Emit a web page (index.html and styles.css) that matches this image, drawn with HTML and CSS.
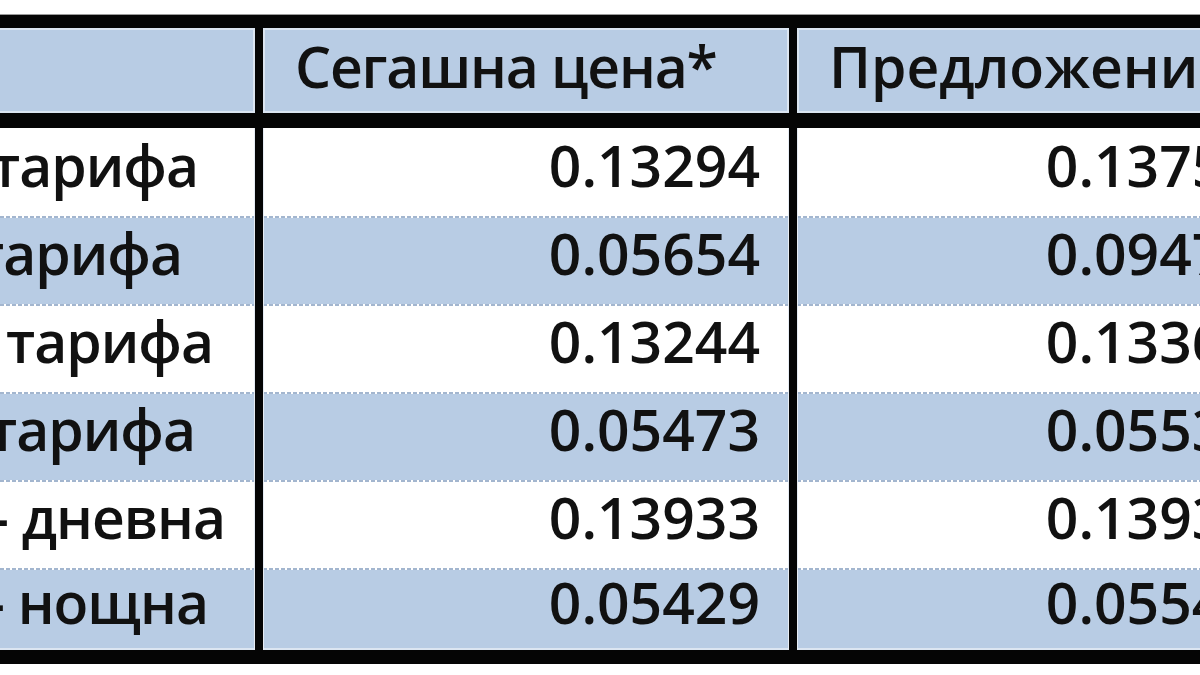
FILE: index.html
```html
<!DOCTYPE html>
<html lang="bg">
<head>
<meta charset="utf-8">
<title>Цени на електроенергия</title>
<link rel="stylesheet" href="styles.css">
</head>
<body>
<div class="sheet">
  <div class="head">
    <div class="cell hcell"></div>
    <div class="cell hcell tight">Сегашна цена*</div>
    <div class="cell hcell">Предложение</div>
  </div>
  <div class="body">
    <div class="cell lbl r1 white first">ЧЕЗ дневна тарифа</div>
    <div class="cell num r1 white first">0.13294</div>
    <div class="cell num r1 white first">0.13752</div>

    <div class="cell lbl r2 blue">ЧЕЗ нощна тарифа</div>
    <div class="cell num r2 blue">0.05654</div>
    <div class="cell num r2 blue">0.09471</div>

    <div class="cell lbl r3 white">ЕВН дневна тарифа</div>
    <div class="cell num r3 white">0.13244</div>
    <div class="cell num r3 white">0.13364</div>

    <div class="cell lbl r4 blue">ЕВН нощна тарифа</div>
    <div class="cell num r4 blue">0.05473</div>
    <div class="cell num r4 blue">0.05531</div>

    <div class="cell lbl r5 white">Енерго-Про - дневна</div>
    <div class="cell num r5 white">0.13933</div>
    <div class="cell num r5 white">0.13931</div>

    <div class="cell lbl r6 blue last">Енерго-Про - нощна</div>
    <div class="cell num r6 blue last">0.05429</div>
    <div class="cell num r6 blue last">0.05544</div>
  </div>
</div>
</body>
</html>
```
FILE: styles.css
```css
html, body {
  margin: 0;
  padding: 0;
  background: #ffffff;
  overflow: hidden;
}
body {
  width: 1200px;
  height: 675px;
  font-family: "Open Sans", "Noto Sans", sans-serif;
  font-size: 57px;
  font-weight: 600;
  color: #111111;
}
.sheet {
  margin-top: 14px;
  margin-left: -420px;
  width: 1706px;
  background: #050505;
  border-top: 1px solid #9a9a9a;
  padding: 13px 0 14px 0;
  display: flex;
  flex-direction: column;
  gap: 15px;
}
.head, .body {
  display: grid;
  grid-template-columns: 675px 526px 489px;
  column-gap: 8px;
}
.head {
  grid-template-rows: 85px;
}
.body {
  grid-template-rows: 88px 88px 88px 88px 88px 82px;
}
.cell {
  display: flex;
  align-items: center;
  white-space: nowrap;
  overflow: hidden;
  min-width: 0;
  box-shadow: inset 1px 0 #e6ecf4, inset -1px 0 #e6ecf4;
}
.hcell {
  background: #b8cce4;
  padding: 0 0 10px 32px;
  box-shadow: inset 0 0 0 2px #dbe5f1;
}
.hcell.tight {
  letter-spacing: -1.2px;
}
.white { background-color: #ffffff; }
.blue { background-color: #b8cce4; }
.body .cell {
  padding-bottom: 14px;
  background-image: repeating-linear-gradient(90deg, #a3b6cf 0 4px, #ffffff 4px 6px);
  background-size: 100% 2px;
  background-repeat: no-repeat;
  background-position: 0 0;
}
.body .first {
  background-image: none;
}
.body .last {
  box-shadow: inset 1px 0 #e6ecf4, inset -1px 0 #e6ecf4, inset 0 -2px #dbe5f1;
}
.lbl {
  justify-content: flex-end;
  letter-spacing: -1px;
}
.lbl.r1 { padding-right: 57px; }
.lbl.r2 { padding-right: 73px; }
.lbl.r3 { padding-right: 42px; }
.lbl.r4 { padding-right: 60px; }
.lbl.r5 { padding-right: 30px; }
.lbl.r6 { padding-right: 47px; }
.num {
  justify-content: flex-end;
  padding-right: 29px;
}
```
